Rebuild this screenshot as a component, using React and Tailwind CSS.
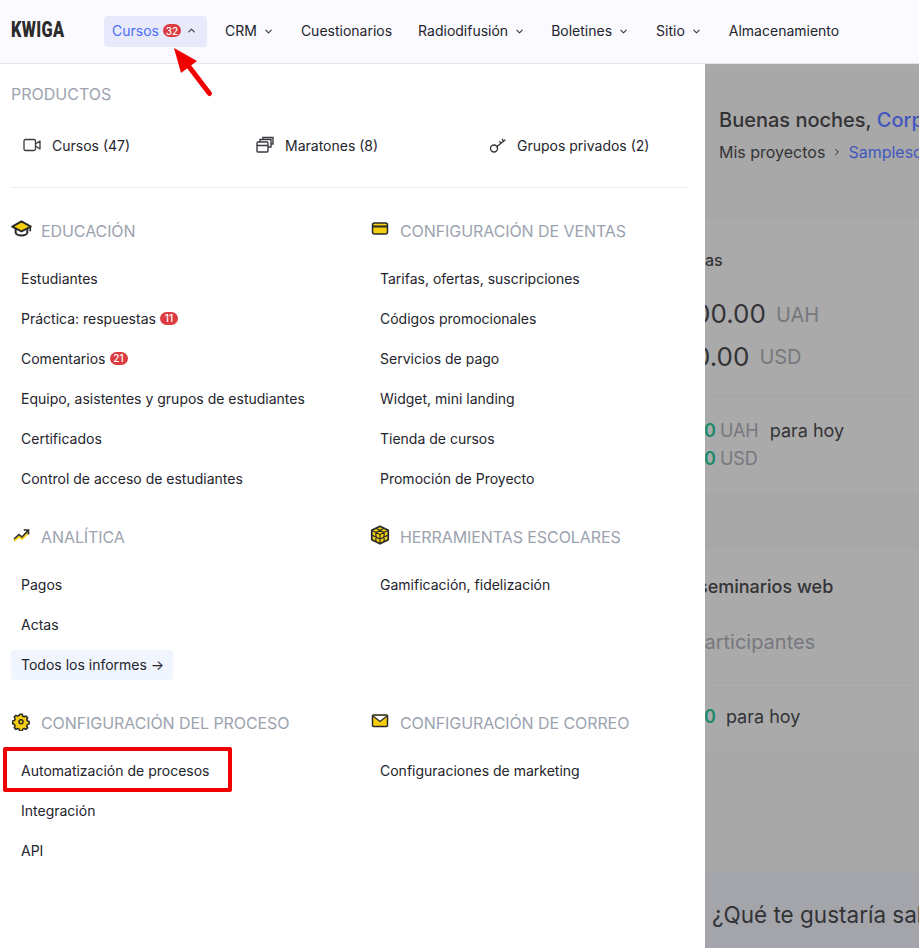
import { ChevronDown, ChevronUp, ChevronRight } from "lucide-react";

const Badge = ({ children }) => (
  <span className="ml-[4px] inline-flex h-[13px] w-[18px] items-center justify-center rounded-full bg-[#dc3c41] text-[10px] leading-none font-medium text-white">
    {children}
  </span>
);

const NavItem = ({ label, arrow, className }) => (
  <div className={`flex items-center pb-[2px] text-[14px] whitespace-nowrap text-[#24242c] ${className}`}>
    {label}
    {arrow && <ChevronDown className="mt-[2px] ml-[6px] h-[11px] w-[11px] text-[#3a3a40]" strokeWidth={2.4} />}
  </div>
);

const GradIcon = () => (
  <svg viewBox="1 2 18 16" className="h-[20px] w-[21px]">
    <path d="M5 9v4c0 1.500 2.500 2.500 5 2.500s5-1 5-2.500V9" fill="none" stroke="#2a2a2a" strokeWidth="1.700" />
    <path d="M10 3.500 18 8 10 12 2 8z" fill="#f5cf0f" stroke="#2a2a2a" strokeWidth="1.600" strokeLinejoin="round" />
    <path d="M17.500 8v4" stroke="#2a2a2a" strokeWidth="1.400" />
  </svg>
);

const CardIcon = () => (
  <svg viewBox="0 0 20 20" className="h-[20px] w-[20px]">
    <rect x="2.500" y="4" width="15" height="11" rx="2" fill="#f5cf0f" stroke="#2a2a2a" strokeWidth="1.500" />
    <path d="M2.500 7.500h15" stroke="#2a2a2a" strokeWidth="2" />
  </svg>
);

const TrendIcon = () => (
  <svg viewBox="0 0 20 20" className="h-[20px] w-[20px]">
    <path d="M3 14.500 8 10l3 2.500 6-6" fill="none" stroke="#f5cf0f" strokeWidth="1.800" transform="translate(0 1.500)" />
    <path d="M3 14 8 9.500l3 2.500 6-6.500M12.800 5H17.500v4.500" fill="none" stroke="#2a2a2a" strokeWidth="1.600" />
  </svg>
);

const CubeIcon = () => (
  <svg viewBox="1.500 1.500 17 17" className="h-[20px] w-[20px]">
    <path d="M10 2.500 17 6v8l-7 3.500L3 14V6z" fill="#f5cf0f" stroke="#2a2a2a" strokeWidth="1.500" strokeLinejoin="round" />
    <path d="M3 6l7 3.500L17 6M10 9.500v8M6.500 4.200l7 3.600M13.500 4.200l-7 3.600M3 10l7 3.500 7-3.500M6.500 8v7.500M13.500 8v7.500" fill="none" stroke="#2a2a2a" strokeWidth="1" />
  </svg>
);

const GearIcon = () => (
  <svg viewBox="0 0 20 20" className="h-[20px] w-[20px]">
    <path
      d="M8.600 2.500h2.800l.5 2 1.700.8 1.900-.9 1.900 2-1 1.800.7 1.800 2 .6v2.600l-2 .6-.7 1.700 1 1.900-2 1.900-1.800-1-1.700.7-.6 2H8.600l-.6-2-1.700-.7-1.800 1-2-1.900 1-1.900-.7-1.700-2-.6V9.900l2-.6.7-1.800-1-1.800 1.900-2 1.900.9 1.700-.8z"
      transform="translate(1 1) scale(.9)"
      fill="#f5cf0f"
      stroke="#2a2a2a"
      strokeWidth="1.700"
      strokeLinejoin="round"
    />
    <circle cx="10" cy="10.800" r="2" fill="none" stroke="#2a2a2a" strokeWidth="1.500" />
  </svg>
);

const MailIcon = () => (
  <svg viewBox="0 0 20 20" className="h-[20px] w-[20px]">
    <rect x="2.500" y="4" width="15" height="11.500" rx="1" fill="#f5cf0f" stroke="#2a2a2a" strokeWidth="1.500" />
    <path d="M3 5l7 5.500L17 5" fill="#fff" stroke="#2a2a2a" strokeWidth="1.300" />
  </svg>
);

const VideoIcon = () => (
  <svg viewBox="0 0 18 18" fill="none" stroke="#3a3a40" strokeWidth="1.300" strokeLinejoin="round" className="h-[18px] w-[18px]">
    <rect x="1" y="3.500" width="11.500" height="11" rx="1.500" />
    <path d="M12.500 8 17 5v8l-4.500-3" />
  </svg>
);

const WindowsIcon = () => (
  <svg viewBox="0 0 18 18" fill="none" stroke="#3a3a40" strokeWidth="1.400" className="h-[18px] w-[18px]">
    <rect x="1" y="6" width="11" height="10" rx="1" />
    <path d="M1 9.500h11M4 6V3.500h11V11h-3M7 3.500V1.500h10V8h-2" />
  </svg>
);

const KeyIcon = () => (
  <svg viewBox="0 0 18 18" fill="none" stroke="#3a3a40" strokeWidth="1.400" strokeLinecap="round" className="h-[18px] w-[18px]">
    <circle cx="5" cy="12.500" r="3.500" />
    <path d="M8 10.500 16 4M12 7.500l-1.200-2M14.500 5.500l-1.200-2.200" />
  </svg>
);

const Group = ({ icon, title, children }) => (
  <div>
    <div className="mb-[16px] flex h-[24px] items-center">
      <div className="w-[30px] pb-[5px]">{icon}</div>
      <span className="text-[16px] tracking-[-0.08px] text-[#9ca3af]">{title}</span>
    </div>
    {children}
  </div>
);

const Row = ({ children }) => (
  <div className="flex h-[40px] items-center pb-[2px] pl-[10px] text-[14px] whitespace-nowrap text-[#24242c]">{children}</div>
);

export default function App() {
  return (
    <div className="relative h-[948px] w-[919px] overflow-hidden font-['Inter',sans-serif]">
      {/* Top nav */}
      <header className="flex h-[64px] items-center border-b border-[#e2e2ec] bg-[#fafaff] pl-[11px]">
        <div className="w-[93px] font-['Roboto',sans-serif]">
          <span className="inline-block origin-left scale-x-[0.74] text-[22px] leading-none font-black tracking-[0.5px] text-[#2b2b2b]">
            KWIGA
          </span>
        </div>
        <div className="flex h-[31px] w-[103px] items-center rounded-[4px] bg-[#e8eafc] pb-[2px] pl-[8px] text-[14px] text-[#4a6cf7]">
          Cursos
          <Badge>32</Badge>
          <ChevronUp className="ml-[5px] h-[11px] w-[11px] text-[#3a3a40]" strokeWidth={2.4} />
        </div>
        <NavItem label="CRM" arrow className="ml-[18px]" />
        <NavItem label="Cuestionarios" className="ml-[27px]" />
        <NavItem label="Radiodifusión" arrow className="ml-[26px]" />
        <NavItem label="Boletines" arrow className="ml-[26px]" />
        <NavItem label="Sitio" arrow className="ml-[27px]" />
        <NavItem label="Almacenamiento" className="ml-[27px]" />
      </header>

      <div className="flex h-[884px]">
        {/* Dropdown menu */}
        <nav className="w-[705px] shrink-0 bg-white pt-[18px] pl-[11px]">
          <div className="flex h-[24px] items-center text-[16px] text-[#9ca3af]">PRODUCTOS</div>
          <div className="mt-[19px] ml-[12px] grid h-[40px] grid-cols-[233px_233px_233px] items-center text-[14px] text-[#24242c]">
            <div className="flex items-center">
              <span className="mr-[11px]"><VideoIcon /></span>
              Cursos (47)
            </div>
            <div className="flex items-center">
              <span className="mr-[11px]"><WindowsIcon /></span>
              Maratones (8)
            </div>
            <div className="flex items-center">
              <span className="mr-[10px]"><KeyIcon /></span>
              Grupos privados (2)
            </div>
          </div>
          <div className="mt-[22px] h-px w-[677px] bg-[#f0f0f4]" />

          <div className="mt-[31px] grid grid-cols-[359px_1fr] gap-y-[26px]">
            <Group icon={<GradIcon />} title="EDUCACIÓN">
              <Row>Estudiantes</Row>
              <Row>Práctica: respuestas<Badge>11</Badge></Row>
              <Row>Comentarios<Badge>21</Badge></Row>
              <Row>Equipo, asistentes y grupos de estudiantes</Row>
              <Row>Certificados</Row>
              <Row>Control de acceso de estudiantes</Row>
            </Group>
            <Group icon={<CardIcon />} title="CONFIGURACIÓN DE VENTAS">
              <Row>Tarifas, ofertas, suscripciones</Row>
              <Row>Códigos promocionales</Row>
              <Row>Servicios de pago</Row>
              <Row>Widget, mini landing</Row>
              <Row>Tienda de cursos</Row>
              <Row>Promoción de Proyecto</Row>
            </Group>
            <Group icon={<TrendIcon />} title="ANALÍTICA">
              <Row>Pagos</Row>
              <Row>Actas</Row>
              <div className="flex h-[40px] items-center">
                <div className="flex h-[30px] w-[162px] items-center rounded-[4px] bg-[#f1f5fe] pb-[2px] pl-[10px] text-[14px] whitespace-nowrap text-[#24242c]">
                  Todos los informes →
                </div>
              </div>
            </Group>
            <Group icon={<CubeIcon />} title="HERRAMIENTAS ESCOLARES">
              <Row>Gamificación, fidelización</Row>
            </Group>
            <Group icon={<GearIcon />} title="CONFIGURACIÓN DEL PROCESO">
              <Row>Automatización de procesos</Row>
              <Row>Integración</Row>
              <Row>API</Row>
            </Group>
            <Group icon={<MailIcon />} title="CONFIGURACIÓN DE CORREO">
              <Row>Configuraciones de marketing</Row>
            </Group>
          </div>
        </nav>

        {/* Dimmed page behind the menu */}
        <main className="flex min-w-0 flex-1 flex-col overflow-hidden bg-[#a8a8a8] text-[#333336]">
          <div className="h-[9px] bg-[#aaaaaa]" />
          <div className="mt-[33px] pl-[14px] text-[20px] leading-[28px] font-medium whitespace-nowrap">
            Buenas noches, <span className="text-[#4257bf]">Corporate</span>
          </div>
          <div className="mt-[6px] flex h-[24px] items-center pl-[14px] text-[16px] whitespace-nowrap">
            Mis proyectos
            <ChevronRight className="mx-[6.500px] h-[10px] w-[10px] shrink-0 text-[#222]" strokeWidth={2.4} />
            <span className="text-[#4257bf]">Samplesc</span>
          </div>

          <section className="mt-[56px] h-[273px] bg-[#aaaaaa]">
            <div className="mt-[28px] -ml-[35px] text-[16px] leading-[24px] font-medium whitespace-nowrap">Ventas</div>
            <div className="mt-[23px] -ml-[27px] flex h-[36px] items-center whitespace-nowrap">
              <span className="text-[26px]">900.00</span>
              <span className="mt-[3px] ml-[10px] text-[20px] text-[#77787f]">UAH</span>
            </div>
            <div className="mt-[7px] -ml-[11px] flex h-[36px] items-center whitespace-nowrap">
              <span className="text-[26px]">0.00</span>
              <span className="mt-[1px] ml-[10px] text-[20px] text-[#77787f]">USD</span>
            </div>
            <div className="mt-[22px] h-px bg-[#a5a5a5]" />
            <div className="mt-[19px] -ml-[1px] flex h-[28px] items-center text-[18px] whitespace-nowrap">
              <span className="font-semibold text-[#1b8a6b]">0</span>
              <span className="ml-[4px] text-[#77787f]">UAH</span>
              <span className="ml-[11px]">para hoy</span>
            </div>
            <div className="-ml-[1px] flex h-[28px] items-center text-[18px] whitespace-nowrap">
              <span className="font-semibold text-[#1b8a6b]">0</span>
              <span className="ml-[4px] text-[#77787f]">USD</span>
            </div>
          </section>

          <section className="mt-[56px] h-[203px] bg-[#aaaaaa]">
            <div className="mt-[24px] -ml-[7px] text-[18px] leading-[28px] font-medium whitespace-nowrap">seminarios web</div>
            <div className="mt-[27px] -ml-[13px] text-[20px] leading-[28px] whitespace-nowrap text-[#77787f]">participantes</div>
            <div className="mt-[26px] h-px bg-[#a5a5a5]" />
            <div className="mt-[19px] -ml-[1px] flex h-[28px] items-center text-[18px] whitespace-nowrap">
              <span className="font-semibold text-[#1b8a6b]">0</span>
              <span className="ml-[10px]">para hoy</span>
            </div>
          </section>

          <section className="mt-[120px] flex flex-1 items-center bg-[#a4a5ab] pt-[10px] pl-[7px] text-[22.500px] whitespace-nowrap">
            ¿Qué te gustaría saber
          </section>
        </main>
      </div>

      {/* Screenshot annotations */}
      <div className="absolute top-[747px] left-[3px] h-[45px] w-[229px] rounded-[2px] border-[4px] border-[#f00000]" />
      <svg className="absolute top-[46px] left-[170px] h-[54px] w-[46px]" viewBox="0 0 46 54">
        <path d="M39.500 47.500 17 18" stroke="#f00000" strokeWidth="5" strokeLinecap="round" />
        <path d="M4 2 27 15 11 27z" fill="#f00000" />
      </svg>
    </div>
  );
}
